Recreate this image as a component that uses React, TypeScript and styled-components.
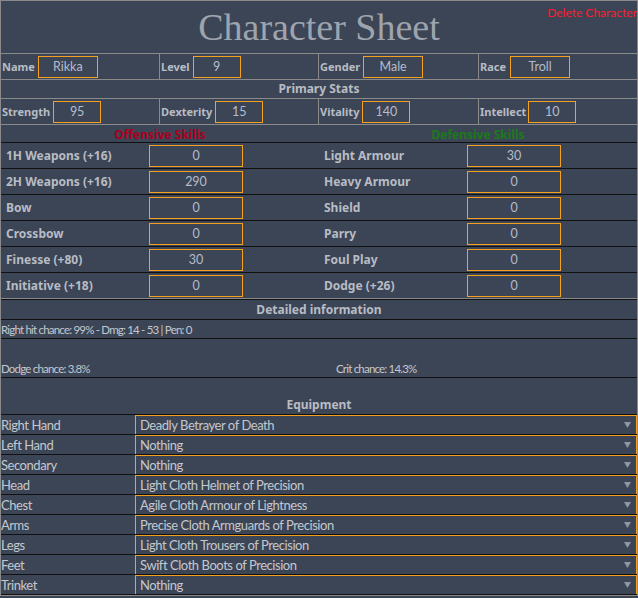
import React from 'react';
import styled, { createGlobalStyle } from 'styled-components';

const GlobalStyle = createGlobalStyle`
  html, body {
    margin: 0;
    padding: 0;
    background-color: #3c4556;
  }
  body {
    font-family: "Noto Sans", "Open Sans", sans-serif;
    font-size: 12px;
    color: #c4c8ce;
  }
`;

const Sheet = styled.div`
  position: relative;
  width: 636px;
  border: 1px solid #8a8a8a;
  background-color: #3c4556;
`;

const Header = styled.div`
  height: 52px;
  display: flex;
  align-items: center;
  justify-content: center;
  border-bottom: 1px solid #8a8a8a;
`;

const Title = styled.h1`
  margin: 0;
  font-family: "Liberation Serif", serif;
  font-weight: normal;
  font-size: 38px;
  color: #9ea4ad;
`;

const DeleteLink = styled.a`
  position: absolute;
  top: 4px;
  right: 0;
  font-family: Lato, "Noto Sans", sans-serif;
  color: #ff1a2e;
  font-size: 12px;
  cursor: pointer;
`;

const FieldRow = styled.div`
  display: grid;
  grid-template-columns: 158px 159px 160px 1fr;
  height: 25px;
  border-bottom: 1px solid #8a8a8a;
`;

const FieldCell = styled.div<{ first?: boolean }>`
  display: flex;
  align-items: center;
  padding-left: 1px;
  border-left: ${(p) => (p.first ? 'none' : '1px solid #8a8a8a')};
`;

const FieldLabel = styled.span<{ gap?: number }>`
  font-weight: bold;
  font-size: 11px;
  color: #b8bcc4;
  margin-right: ${(p) => p.gap ?? 3}px;
`;

const Box = styled.input<{ w: number }>`
  box-sizing: border-box;
  width: ${(p) => p.w}px;
  height: 22px;
  border: 1px solid #f5a01e;
  background: transparent;
  color: #b4bccb;
  font-family: Lato, "Noto Sans", sans-serif;
  font-size: 12.5px;
  text-align: center;
  padding: 0;
  outline: none;
`;

const SectionTitle = styled.div<{ h: number; line?: string; top?: string }>`
  height: ${(p) => p.h}px;
  display: flex;
  align-items: flex-end;
  justify-content: center;
  padding-bottom: 1px;
  box-sizing: border-box;
  font-weight: bold;
  color: #b8bcc4;
  border-top: ${(p) => (p.top ? `1px solid ${p.top}` : 'none')};
  border-bottom: 1px solid ${(p) => p.line || '#8a8a8a'};
`;

const Skills = styled.div`
  display: grid;
  grid-template-columns: 318px 1fr;
  border-bottom: 1px solid #8a8a8a;
`;

const SkillColumn = styled.div``;

const SkillHeading = styled.div<{ color: string }>`
  display: flex;
  align-items: center;
  justify-content: center;
  padding-top: 1px;
  height: 16px;
  font-weight: bold;
  color: ${(p) => p.color};
  border-bottom: 1px solid #111;
`;

const SkillRow = styled.div`
  height: 25px;
  display: grid;
  grid-template-columns: 148px 94px;
  align-items: center;
  border-bottom: 1px solid #111;
  &:last-child {
    border-bottom: none;
  }
`;

const SkillLabel = styled.span`
  padding-left: 5px;
  font-weight: bold;
  color: #b8bcc4;
`;

const DetailLine = styled.div<{ h: number }>`
  height: ${(p) => p.h}px;
  display: grid;
  grid-template-columns: 335px 1fr;
  align-items: end;
  padding-bottom: 2px;
  box-sizing: border-box;
  border-bottom: 1px solid #111;
  font-family: Lato, "Noto Sans", sans-serif;
  font-size: 11.5px;
  letter-spacing: -0.8px;
  color: #c4c8ce;
`;

const EquipRow = styled.div`
  display: grid;
  grid-template-columns: 134px 1fr;
  height: 20px;
  border-bottom: 1px solid #111;
  box-sizing: border-box;
`;

const EquipLabel = styled.div`
  display: flex;
  align-items: center;
  font-family: Lato, "Noto Sans", sans-serif;
  font-size: 13px;
  letter-spacing: -0.45px;
  color: #c4c8ce;
`;

const EquipSelect = styled.div`
  display: flex;
  align-items: center;
  justify-content: space-between;
  border: 1px solid #f5a01e;
  border-bottom: none;
  padding: 0 5px 0 4px;
  font-family: Lato, "Noto Sans", sans-serif;
  font-size: 13px;
  letter-spacing: -0.45px;
  color: #c4c8ce;
`;

const Arrow = () => (
  <svg width="7" height="6" viewBox="0 0 7 6">
    <path d="M0 0 H7 L3.5 6 Z" fill="#8f96a2" />
  </svg>
);

const offensive: [string, string][] = [
  ['1H Weapons (+16)', '0'],
  ['2H Weapons (+16)', '290'],
  ['Bow', '0'],
  ['Crossbow', '0'],
  ['Finesse (+80)', '30'],
  ['Initiative (+18)', '0'],
];

const defensive: [string, string][] = [
  ['Light Armour', '30'],
  ['Heavy Armour', '0'],
  ['Shield', '0'],
  ['Parry', '0'],
  ['Foul Play', '0'],
  ['Dodge (+26)', '0'],
];

const equipment: [string, string][] = [
  ['Right Hand', 'Deadly Betrayer of Death'],
  ['Left Hand', 'Nothing'],
  ['Secondary', 'Nothing'],
  ['Head', 'Light Cloth Helmet of Precision'],
  ['Chest', 'Agile Cloth Armour of Lightness'],
  ['Arms', 'Precise Cloth Armguards of Precision'],
  ['Legs', 'Light Cloth Trousers of Precision'],
  ['Feet', 'Swift Cloth Boots of Precision'],
  ['Trinket', 'Nothing'],
];

const App: React.FC = () => {
  return (
    <>
      <GlobalStyle />
      <Sheet>
        <Header>
          <Title>Character Sheet</Title>
        </Header>
        <DeleteLink>Delete Character</DeleteLink>

        <FieldRow>
          <FieldCell first>
            <FieldLabel>Name</FieldLabel>
            <Box w={60} defaultValue="Rikka" />
          </FieldCell>
          <FieldCell>
            <FieldLabel>Level</FieldLabel>
            <Box w={48} defaultValue="9" />
          </FieldCell>
          <FieldCell>
            <FieldLabel>Gender</FieldLabel>
            <Box w={60} defaultValue="Male" />
          </FieldCell>
          <FieldCell>
            <FieldLabel gap={4}>Race</FieldLabel>
            <Box w={60} defaultValue="Troll" />
          </FieldCell>
        </FieldRow>

        <SectionTitle h={19}>Primary Stats</SectionTitle>

        <FieldRow>
          <FieldCell first>
            <FieldLabel>Strength</FieldLabel>
            <Box w={48} defaultValue="95" />
          </FieldCell>
          <FieldCell>
            <FieldLabel>Dexterity</FieldLabel>
            <Box w={48} defaultValue="15" />
          </FieldCell>
          <FieldCell>
            <FieldLabel>Vitality</FieldLabel>
            <Box w={48} defaultValue="140" />
          </FieldCell>
          <FieldCell>
            <FieldLabel gap={2}>Intellect</FieldLabel>
            <Box w={48} defaultValue="10" />
          </FieldCell>
        </FieldRow>

        <Skills>
          <SkillColumn>
            <SkillHeading color="#a8001c">Offensive Skills</SkillHeading>
            {offensive.map(([label, value]) => (
              <SkillRow key={label}>
                <SkillLabel>{label}</SkillLabel>
                <Box w={94} defaultValue={value} />
              </SkillRow>
            ))}
          </SkillColumn>
          <SkillColumn>
            <SkillHeading color="#1a7a1a">Defensive Skills</SkillHeading>
            {defensive.map(([label, value]) => (
              <SkillRow key={label}>
                <SkillLabel>{label}</SkillLabel>
                <Box w={94} defaultValue={value} />
              </SkillRow>
            ))}
          </SkillColumn>
        </Skills>

        <SectionTitle h={21} line="#111" top="#111">Detailed information</SectionTitle>
        <DetailLine h={19}>
          <span>Right hit chance: 99% - Dmg: 14 - 53 | Pen: 0</span>
        </DetailLine>
        <DetailLine h={39}>
          <span>Dodge chance: 3.8%</span>
          <span>Crit chance: 14.3%</span>
        </DetailLine>

        <SectionTitle h={37} line="#111">Equipment</SectionTitle>
        {equipment.map(([slot, item]) => (
          <EquipRow key={slot}>
            <EquipLabel>{slot}</EquipLabel>
            <EquipSelect>
              <span>{item}</span>
              <Arrow />
            </EquipSelect>
          </EquipRow>
        ))}
      </Sheet>
    </>
  );
};

export default App;
